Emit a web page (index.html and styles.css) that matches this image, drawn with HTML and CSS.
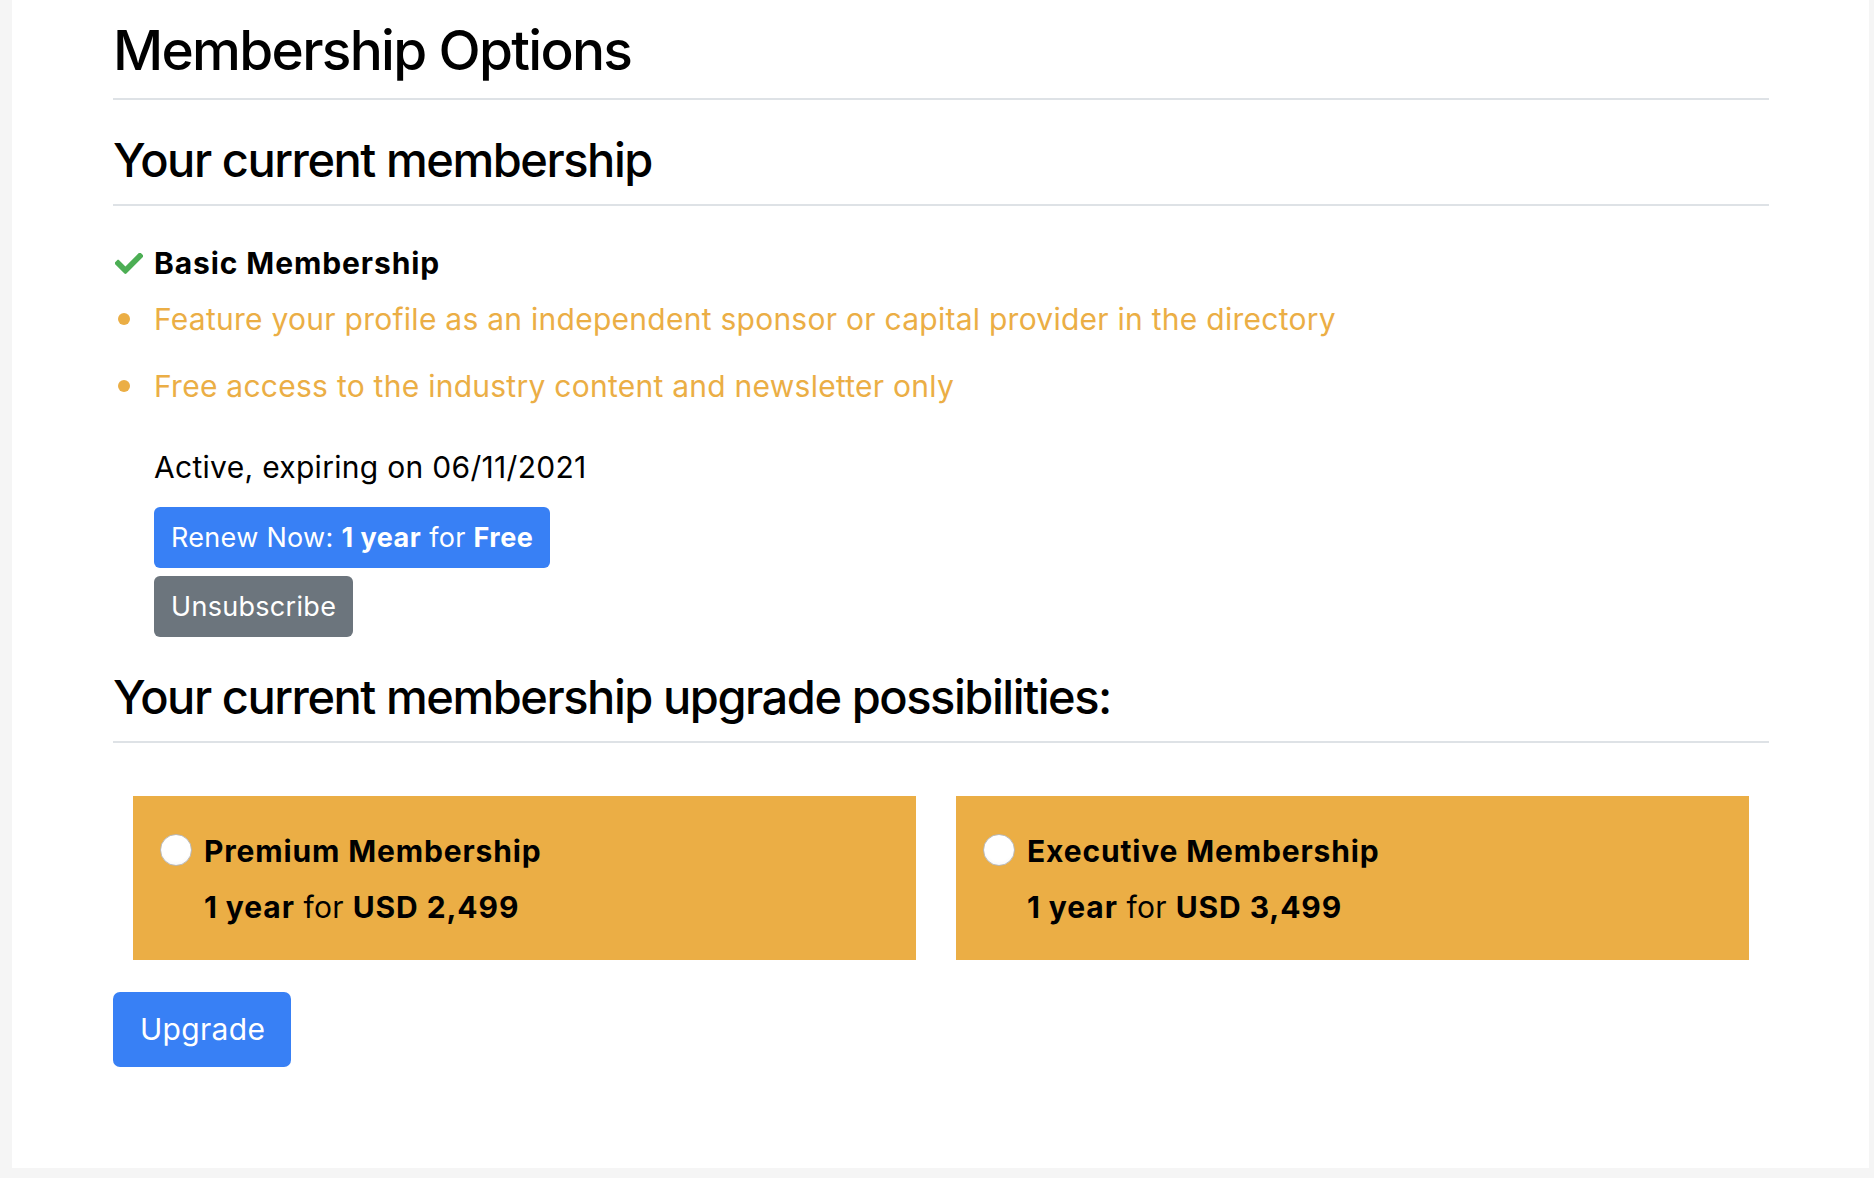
FILE: index.html
```html
<!DOCTYPE html>
<html lang="en">
<head>
<meta charset="utf-8">
<title>Membership Options</title>
<link rel="stylesheet" href="styles.css">
</head>
<body>
<main class="panel">
  <h1 class="page-title">Membership Options</h1>

  <h2 class="section-title">Your current membership</h2>
  <section class="current">
    <div class="plan-name">
      <svg class="check" viewBox="7 72 498 376" aria-hidden="true"><path d="M173.9 439.4l-166.4-166.4c-10-10-10-26.2 0-36.2l36.2-36.2c10-10 26.2-10 36.2 0L192 312.7 432.1 72.6c10-10 26.2-10 36.2 0l36.2 36.2c10 10 10 26.2 0 36.2L210.1 439.4c-10 10-26.2 10-36.2 0z"/></svg>
      <span>Basic Membership</span>
    </div>
    <ul class="features">
      <li>Feature your profile as an independent sponsor or capital provider in the directory</li>
      <li>Free access to the industry content and newsletter only</li>
    </ul>
    <div class="status">
      <p class="status-text">Active, expiring on 06/11/2021</p>
      <div class="actions">
        <button class="btn btn-primary">Renew Now: <b>1 year</b> for <b>Free</b></button>
        <button class="btn btn-secondary">Unsubscribe</button>
      </div>
    </div>
  </section>

  <h2 class="section-title upgrade-title">Your current membership upgrade possibilities:</h2>
  <div class="options">
    <label class="option">
      <span class="radio"></span>
      <span class="option-body">
        <span class="option-name">Premium Membership</span>
        <span class="option-price"><b>1 year</b> for <b>USD 2,499</b></span>
      </span>
    </label>
    <label class="option">
      <span class="radio"></span>
      <span class="option-body">
        <span class="option-name">Executive Membership</span>
        <span class="option-price"><b>1 year</b> for <b>USD 3,499</b></span>
      </span>
    </label>
  </div>
  <button class="btn btn-primary btn-lg">Upgrade</button>
</main>
</body>
</html>
```
FILE: styles.css
```css
* { box-sizing: border-box; }

html, body {
  margin: 0;
  padding: 0;
  background: #f5f5f5;
}

body {
  font-family: Inter, "Noto Sans", "Liberation Sans", sans-serif;
  color: #000;
  height: 1178px;
  overflow: hidden;
}

.panel {
  display: block;
  margin: 0 5px 0 12px;
  height: 1168px;
  background: #fff;
  padding: 15px 100px 0 101px;
}

.page-title {
  margin: 0;
  font-size: 55px;
  line-height: 70px;
  font-weight: 500;
  letter-spacing: -1.7px;
  padding-bottom: 13px;
  border-bottom: 2px solid #dee2e6;
}

.section-title {
  margin: 32px 0 0;
  font-size: 47px;
  line-height: 56px;
  font-weight: 500;
  letter-spacing: -1.45px;
  padding-bottom: 16px;
  border-bottom: 2px solid #dee2e6;
}

.current {
  padding-top: 40px;
}

.plan-name {
  display: flex;
  align-items: center;
  gap: 11px;
  font-size: 30px;
  line-height: 34px;
  font-weight: 700;
  letter-spacing: 0.9px;
}

.check {
  width: 28px;
  height: 21px;
  margin-left: 2px;
  fill: #4cae54;
  flex: none;
}

.features {
  list-style: none;
  margin: 17px 0 0;
  padding: 0;
  color: #ebae45;
  font-size: 30px;
  line-height: 45px;
  letter-spacing: 0.26px;
}

.features li {
  display: flex;
  align-items: flex-start;
  margin-bottom: 22px;
}

.features li:last-child { margin-bottom: 0; }

.features li::before {
  content: "";
  flex: none;
  width: 12px;
  height: 12px;
  border-radius: 50%;
  background: #ebae45;
  margin: 16px 24px 0 5px;
}

.status {
  padding-left: 41px;
  margin-top: 36px;
}

.status-text {
  margin: 0;
  font-size: 30px;
  line-height: 45px;
  letter-spacing: 0.3px;
}

.actions {
  display: flex;
  flex-direction: column;
  align-items: flex-start;
  gap: 8px;
  margin-top: 17px;
}

.btn {
  font-family: inherit;
  border: none;
  color: #fff;
  font-size: 27px;
  line-height: 41px;
  letter-spacing: 0.3px;
  padding: 10px 17px;
  border-radius: 6px;
  font-weight: 400;
  cursor: pointer;
}

.btn b { font-weight: 700; letter-spacing: 0.5px; }

.btn-primary { background: #3880f5; }
.btn-secondary { background: #6c757d; }

.upgrade-title {
  margin-top: 32px;
}

.options {
  display: grid;
  grid-template-columns: 783fr 793fr;
  gap: 40px;
  margin: 53px 20px 0;
}

.option {
  display: flex;
  align-items: flex-start;
  gap: 12px;
  background: #ebae45;
  padding: 33px 27px 30px;
  cursor: pointer;
}

.radio {
  flex: none;
  width: 32px;
  height: 32px;
  border-radius: 50%;
  background: radial-gradient(circle at 50% 40%, #fff 60%, #f0f0f0 100%);
  border: 1px solid #b9b9b9;
  margin-top: 5px;
}

.option-body {
  display: flex;
  flex-direction: column;
  gap: 11px;
  font-size: 30px;
  line-height: 45px;
  letter-spacing: 0.3px;
}

.option-name { font-weight: 700; letter-spacing: 0.85px; }

.option-price b { font-weight: 700; letter-spacing: 0.9px; }

.btn-lg {
  display: block;
  margin-top: 32px;
  font-size: 30px;
  line-height: 45px;
  padding: 15px 26px 15px 27px;
  border-radius: 7px;
}
```
